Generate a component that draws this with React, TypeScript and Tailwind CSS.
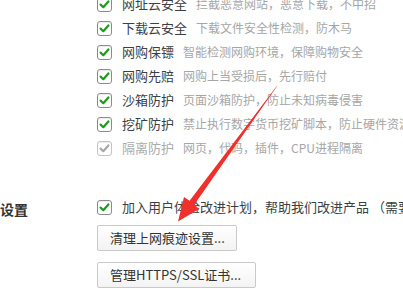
import React from "react";

const font = { fontFamily: '"Microsoft YaHei", "Noto Sans CJK SC", "Noto Sans", sans-serif' };

function Box({ disabled = false }: { disabled?: boolean }) {
  return (
    <span
      className={
        "flex h-[15px] w-[15px] shrink-0 items-center justify-center rounded-[3px] border bg-white shadow-[inset_0_1px_1px_rgba(0,0,0,0.08)] " +
        (disabled ? "border-[#c4c4c4]" : "border-[#8c8c8c]")
      }
    >
      <svg width="11" height="11" viewBox="0 0 11 11">
        <path
          d="M1.6 5.6 L4.3 8.2 L9.4 2.4"
          fill="none"
          stroke={disabled ? "#a8a8a8" : "#1f9a1f"}
          strokeWidth="2.2"
          strokeLinecap="round"
          strokeLinejoin="round"
        />
      </svg>
    </span>
  );
}

const rows = [
  { label: "网址云安全", desc: "拦截恶意网站，恶意下载，不中招" },
  { label: "下载云安全", desc: "下载文件安全性检测，防木马" },
  { label: "网购保镖", desc: "智能检测网购环境，保障购物安全" },
  { label: "网购先赔", desc: "网购上当受损后，先行赔付" },
  { label: "沙箱防护", desc: "页面沙箱防护，防止未知病毒侵害" },
  { label: "挖矿防护", desc: "禁止执行数字货币挖矿脚本，防止硬件资源被占用" },
  { label: "隔离防护", desc: "网页，代码，插件，CPU进程隔离", disabled: true },
];

export default function App() {
  return (
    <div className="relative h-[298px] w-[403px] overflow-hidden bg-white" style={font}>
      <div className="mt-[-8px] flex flex-col pl-[97px]">
        {rows.map((r) => (
          <div key={r.label} className="flex h-6 items-center whitespace-nowrap">
            <Box disabled={r.disabled} />
            <span
              className={
                "ml-[10px] text-[13px] " + (r.disabled ? "text-[#ababab]" : "text-[#3b3f46]")
              }
            >
              {r.label}
            </span>
            <span className="ml-[9px] text-[12px] text-[#a6a6a6]">{r.desc}</span>
          </div>
        ))}
      </div>
      <div className="mt-[35px] flex">
        <div className="w-[97px] shrink-0 pt-[2px] text-[14px] font-bold leading-6 text-[#333]">设置</div>
        <div className="flex flex-col">
          <div className="flex h-6 items-center whitespace-nowrap">
            <Box />
            <span className="ml-[10px] text-[13px] text-[#3b3f46]">
              加入用户体验改进计划，帮助我们改进产品 （需要重启浏览器）
            </span>
          </div>
          <button className="mt-[6px] flex h-[26px] w-[140px] items-center rounded-[2px] border border-[#c9c9c9] bg-gradient-to-b from-white to-[#f3f3f3] pl-[12px] text-[13px] text-[#333]">
            清理上网痕迹设置...
          </button>
          <button className="mt-[11px] flex h-[26px] w-[159px] items-center rounded-[2px] border border-[#c9c9c9] bg-gradient-to-b from-white to-[#f3f3f3] pl-[12px] text-[13px] text-[#333]">
            管理HTTPS/SSL证书...
          </button>
        </div>
      </div>
      <svg className="pointer-events-none absolute left-0 top-0" width="403" height="298" viewBox="0 0 403 298">
        <polygon
          points="277.4,85.7 276.6,86.3 189.6,200.8 184,197 178,221.5 199,209 194.4,204.4"
          fill="#f0302a"
        />
      </svg>
    </div>
  );
}
